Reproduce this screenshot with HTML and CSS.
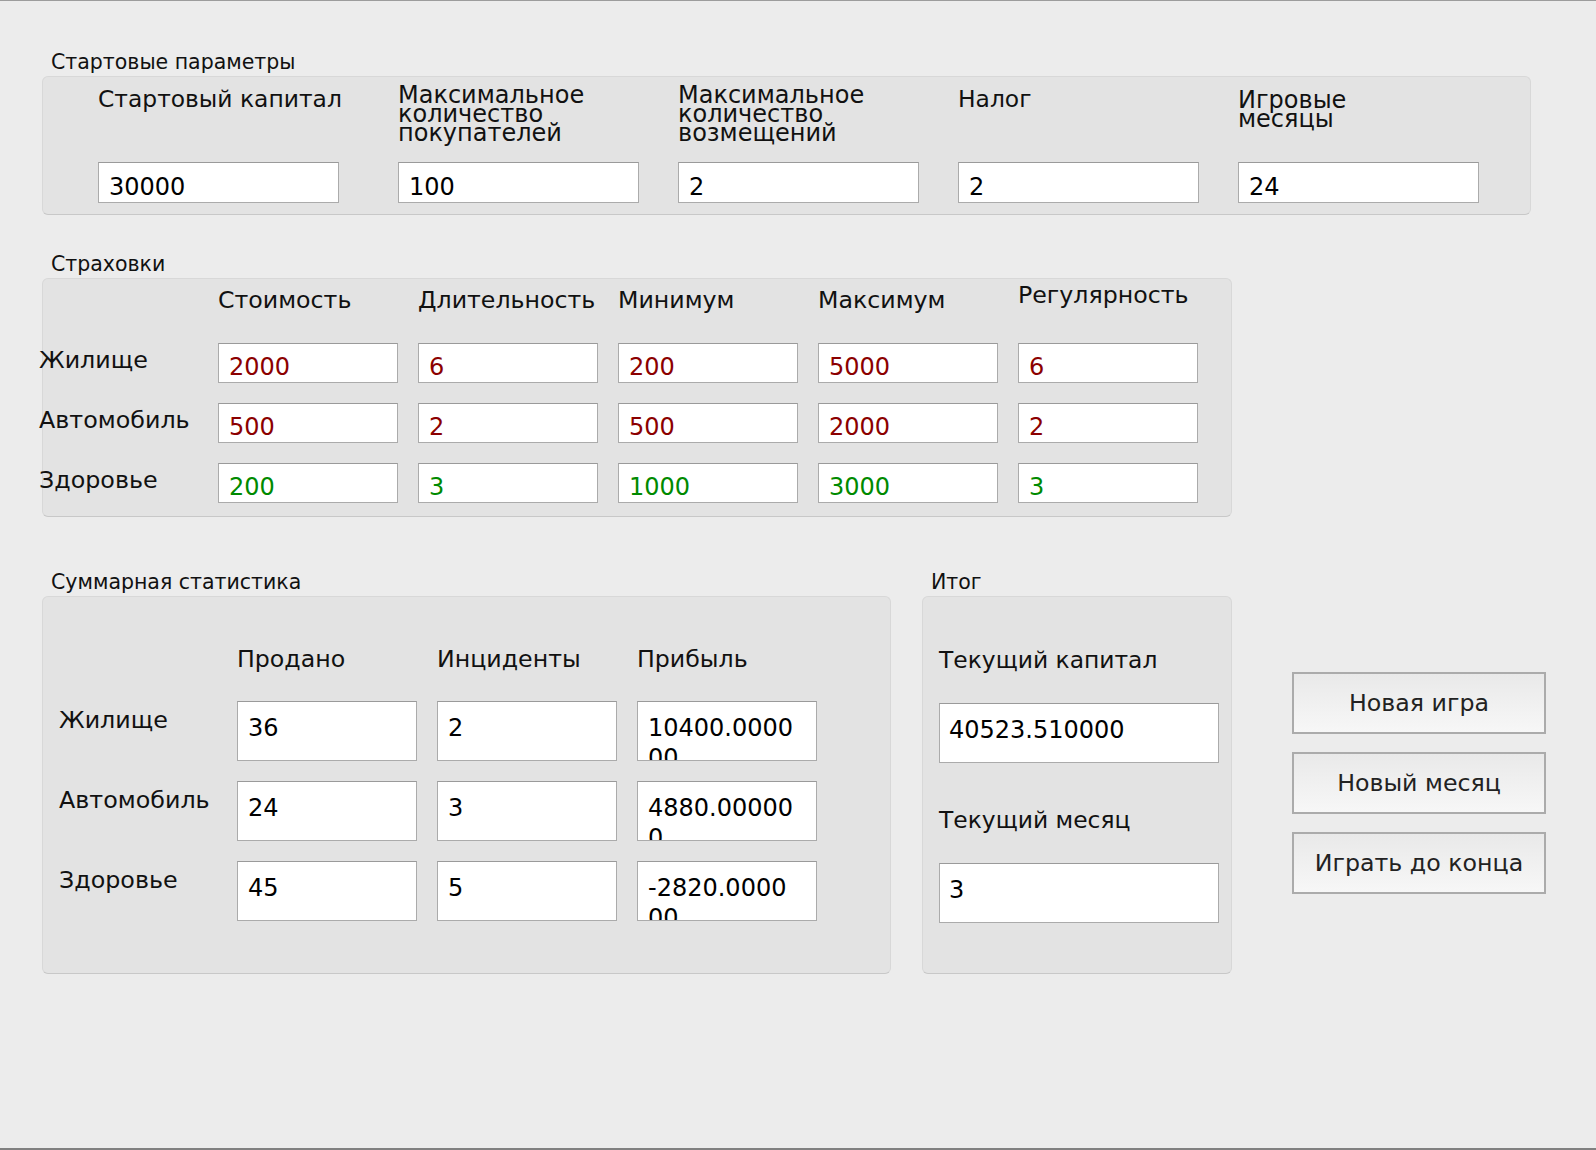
FILE: index.html
```html
<!DOCTYPE html>
<html lang="ru">
<head>
<meta charset="utf-8">
<title>Страхование</title>
<link rel="stylesheet" href="styles.css">
</head>
<body>
<div class="window">

  <div class="gtitle">Стартовые параметры</div>
  <div class="box box-start">
    <div class="pcell">
      <div class="plabel">Стартовый капитал</div>
      <div class="field f-start">30000</div>
    </div>
    <div class="pcell">
      <div class="plabel up">Максимальное<br>количество<br>покупателей</div>
      <div class="field f-start">100</div>
    </div>
    <div class="pcell">
      <div class="plabel up">Максимальное<br>количество<br>возмещений</div>
      <div class="field f-start">2</div>
    </div>
    <div class="pcell">
      <div class="plabel">Налог</div>
      <div class="field f-start">2</div>
    </div>
    <div class="pcell">
      <div class="plabel down">Игровые<br>месяцы</div>
      <div class="field f-start">24</div>
    </div>
  </div>

  <div class="gtitle sec2">Страховки</div>
  <div class="box box-ins">
    <div class="corner"></div>
    <div class="chead">Стоимость</div>
    <div class="chead">Длительность</div>
    <div class="chead">Минимум</div>
    <div class="chead">Максимум</div>
    <div class="chead high">Регулярность</div>

    <div class="rlabel">Жилище</div>
    <div class="field f-ins red">2000</div>
    <div class="field f-ins red">6</div>
    <div class="field f-ins red">200</div>
    <div class="field f-ins red">5000</div>
    <div class="field f-ins red">6</div>

    <div class="rlabel">Автомобиль</div>
    <div class="field f-ins red">500</div>
    <div class="field f-ins red">2</div>
    <div class="field f-ins red">500</div>
    <div class="field f-ins red">2000</div>
    <div class="field f-ins red">2</div>

    <div class="rlabel">Здоровье</div>
    <div class="field f-ins green">200</div>
    <div class="field f-ins green">3</div>
    <div class="field f-ins green">1000</div>
    <div class="field f-ins green">3000</div>
    <div class="field f-ins green">3</div>
  </div>

  <div class="row3">
    <div class="col-stats">
      <div class="gtitle">Суммарная статистика</div>
      <div class="box box-stats">
        <div class="corner"></div>
        <div class="shead">Продано</div>
        <div class="shead">Инциденты</div>
        <div class="shead">Прибыль</div>

        <div class="slabel">Жилище</div>
        <div class="field f-big">36</div>
        <div class="field f-big">2</div>
        <div class="field f-big">10400.000000</div>

        <div class="slabel">Автомобиль</div>
        <div class="field f-big">24</div>
        <div class="field f-big">3</div>
        <div class="field f-big">4880.000000</div>

        <div class="slabel">Здоровье</div>
        <div class="field f-big">45</div>
        <div class="field f-big">5</div>
        <div class="field f-big">-2820.000000</div>
      </div>
    </div>

    <div class="col-total">
      <div class="gtitle">Итог</div>
      <div class="box box-total">
        <div class="tlabel">Текущий капитал</div>
        <div class="field f-total">40523.510000</div>
        <div class="tlabel second">Текущий месяц</div>
        <div class="field f-total">3</div>
      </div>
    </div>

    <div class="col-buttons">
      <button class="btn" type="button">Новая игра</button>
      <button class="btn" type="button">Новый месяц</button>
      <button class="btn" type="button">Играть до конца</button>
    </div>
  </div>

</div>
</body>
</html>
```

FILE: styles.css
```css
* { box-sizing: border-box; }

html, body {
  margin: 0;
  padding: 0;
  background: #ececec;
}

body {
  font-family: "DejaVu Sans", "Liberation Sans", sans-serif;
  color: #111;
}

.window {
  width: 1596px;
  height: 1150px;
  background: #ececec;
  border-top: 1px solid #9c9c9c;
  border-bottom: 2px solid #808080;
  padding: 49px 0 0 42px;
}

/* group box titles */
.gtitle {
  font-size: 20.5px;
  line-height: 24px;
  height: 24px;
  padding-left: 9px;
  margin-bottom: 2px;
  white-space: nowrap;
}

.sec2 { margin-top: 37px; }

.box {
  background: #e3e3e3;
  border: 1px solid #d8d8d8;
  border-bottom-color: #c8c8c8;
  border-radius: 6px;
}

/* generic field */
.field {
  background: #fff;
  border: 1px solid #ababab;
  border-top-color: #9a9a9a;
  font-size: 24px;
  line-height: 28px;
  color: #000;
  white-space: nowrap;
  overflow: hidden;
}

/* ---------- section 1 ---------- */
.box-start {
  width: 1489px;
  height: 139px;
  padding: 11px 0 0 55px;
  display: grid;
  grid-template-columns: 300px 280px 280px 280px 241px;
}

.pcell {
  display: flex;
  flex-direction: column;
}

.plabel {
  height: 74px;
  font-size: 23.4px;
  line-height: 19px;
  padding-top: 2px;
  white-space: nowrap;
}
.plabel.up { padding-top: 0; margin-top: -2px; height: 76px; font-size: 24px; }
.plabel.down { padding-top: 3px; font-size: 24px; }

.f-start {
  width: 241px;
  height: 41px;
  padding: 10px 10px 0 10px;
}

/* ---------- section 2 ---------- */
.box-ins {
  width: 1190px;
  height: 239px;
  display: grid;
  grid-template-columns: 155px repeat(5, 180px);
  grid-template-rows: 44px 40px 40px 40px;
  column-gap: 20px;
  row-gap: 20px;
}

.chead {
  font-size: 23.7px;
  line-height: 28px;
  padding-top: 7px;
  white-space: nowrap;
}
.chead.high { padding-top: 2px; }

.rlabel {
  font-size: 23.8px;
  line-height: 28px;
  padding-top: 3px;
  margin-left: -4px;
  white-space: nowrap;
}

.f-ins {
  height: 40px;
  padding: 9px 10px 0 10px;
}
.red { color: #8b0000; }
.green { color: #008a00; }

/* ---------- section 3 ---------- */
.row3 {
  display: flex;
  align-items: flex-start;
  margin-top: 53px;
}

.col-stats { width: 849px; }

.box-stats {
  width: 849px;
  height: 378px;
  padding-left: 16px;
  display: grid;
  grid-template-columns: 158px repeat(3, 180px);
  grid-template-rows: 84px 60px 60px 60px;
  column-gap: 20px;
  row-gap: 20px;
}

.shead {
  font-size: 23.7px;
  line-height: 28px;
  padding-top: 48px;
  white-space: nowrap;
}

.slabel {
  font-size: 23.8px;
  line-height: 28px;
  padding-top: 5px;
  white-space: nowrap;
}

.f-big {
  height: 60px;
  padding: 11px 20px 0 10px;
  line-height: 30px;
  white-space: normal;
  word-break: break-all;
}

.col-total {
  width: 310px;
  margin-left: 31px;
}

.box-total {
  width: 310px;
  height: 378px;
  padding: 49px 0 0 16px;
}

.tlabel {
  font-size: 23.4px;
  line-height: 28px;
  white-space: nowrap;
}
.tlabel.second { margin-top: 43px; }

.f-total {
  width: 280px;
  height: 60px;
  margin-top: 29px;
  padding: 11px 10px 0 9px;
  line-height: 30px;
}

.col-buttons {
  margin-left: 60px;
  padding-top: 102px;
  display: flex;
  flex-direction: column;
  gap: 18px;
}

.btn {
  width: 254px;
  height: 62px;
  border: 2px solid #ababab;
  border-radius: 0;
  background: linear-gradient(#e9e9e9, #f7f7f7);
  font-family: "DejaVu Sans", "Liberation Sans", sans-serif;
  font-size: 23.7px;
  color: #222;
  padding: 0;
  text-align: center;
}
```
